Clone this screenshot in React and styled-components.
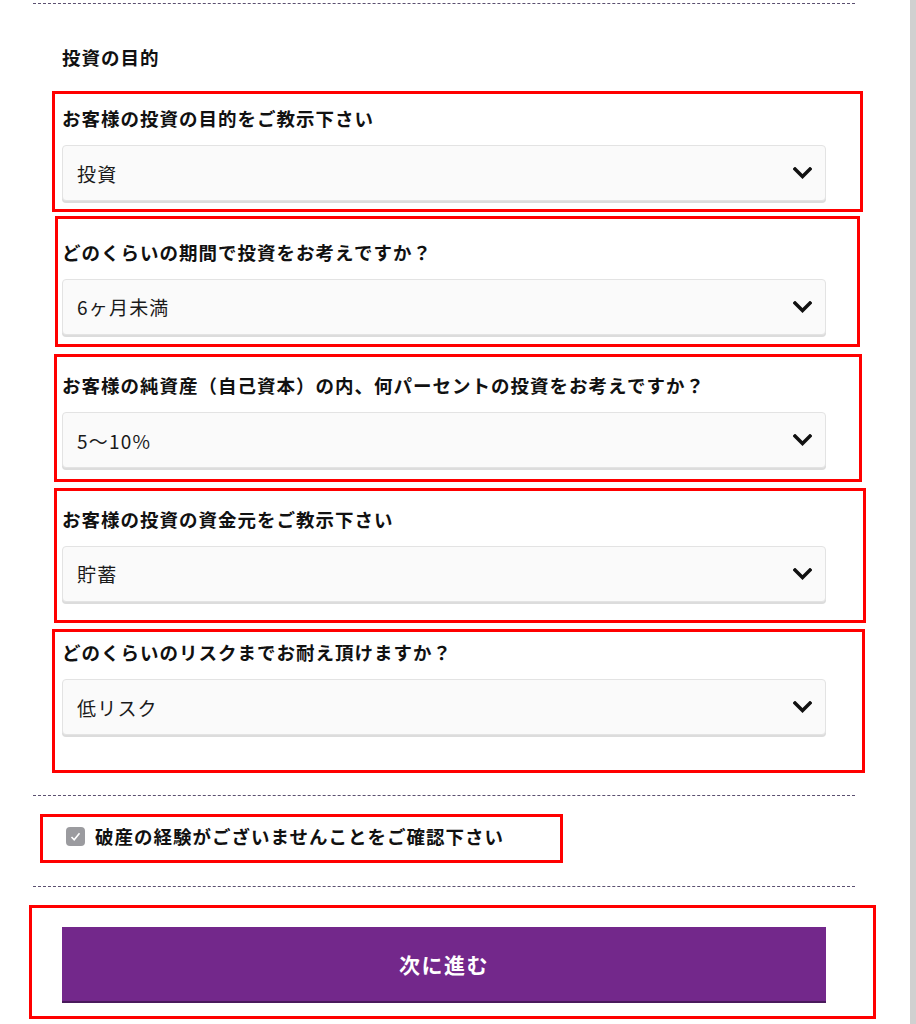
import React from 'react';
import styled, { createGlobalStyle } from 'styled-components';

const GlobalStyle = createGlobalStyle`
    html, body {
        margin: 0;
        padding: 0;
        background: #fff;
    }
    body {
        font-family: "Noto Sans CJK JP", "Noto Sans", sans-serif;
        color: #111;
    }
`;

const Page = styled.div`
    display: flex;
    min-height: 100vh;
`;

const Main = styled.main`
    width: 910px;
    padding-top: 3px;
`;

const Strip = styled.div`
    flex: 1;
    background: #d0d0d0;
`;

const Sheet = styled.div`
    margin-left: 33px;
    width: 822px;
`;

const Divider = styled.div`
    border-top: 1px dashed #5b5070;
`;

const Section = styled.section`
    display: flex;
    flex-direction: column;
    padding: ${p => p.$pad || '0 29px'};
`;

const Title = styled.h2`
    margin: 0 0 37px;
    font-size: 18.5px;
    line-height: 24px;
    font-weight: 700;
    letter-spacing: 1px;
`;

const Group = styled.div`
    position: relative;
    display: flex;
    flex-direction: column;
    gap: 15px;
    margin-bottom: ${p => p.$last ? '0' : '38.5px'};
`;

const Frame = styled.div`
    position: absolute;
    top: ${p => p.$t}px;
    left: ${p => p.$l}px;
    right: ${p => p.$r}px;
    bottom: ${p => p.$b}px;
    border: 3px solid #ff0000;
    pointer-events: none;
`;

const Label = styled.label`
    font-size: 18.5px;
    line-height: 24px;
    font-weight: 700;
    letter-spacing: 1px;
`;

const Select = styled.div`
    display: flex;
    align-items: center;
    justify-content: space-between;
    height: 56px;
    box-sizing: border-box;
    padding: 0 13px 0 14px;
    background: #fafafa;
    border: 1px solid #e3e3e3;
    border-radius: 4px;
    box-shadow: 0 2px 0 #dcdcdc;
    font-size: 19px;
    letter-spacing: 1.2px;
    color: #1a1a1a;
`;

const CheckRow = styled.div`
    position: relative;
    display: flex;
    align-items: center;
    gap: 10px;
    height: 24px;
    padding-left: 4px;
    font-size: 18.5px;
    font-weight: 700;
    letter-spacing: 1px;
`;

const Box = styled.span`
    display: flex;
    align-items: center;
    justify-content: center;
    width: 19px;
    height: 19px;
    border-radius: 4px;
    background: #9b9b9f;
`;

const ButtonWrap = styled.div`
    position: relative;
`;

const NextButton = styled.button`
    width: 100%;
    height: 76px;
    border: 0;
    border-bottom: 2px solid #4a1a5c;
    background: #73288b;
    color: #fff;
    font-family: inherit;
    font-size: 21px;
    font-weight: 700;
    letter-spacing: 1.5px;
    cursor: pointer;
`;

const Chevron = () => (
    <svg width="19" height="12" viewBox="0 0 19 12">
        <polyline points="2,2 9.5,9.5 17,2" fill="none" stroke="#111" strokeWidth="3.4" strokeLinecap="square" />
    </svg>
);

const questions = [
    { label: 'お客様の投資の目的をご教示下さい', value: '投資', frame: [-15, -10, -37, -11] },
    { label: 'どのくらいの期間で投資をお考えですか？', value: '6ヶ月未満', frame: [-23.5, -7, -34, -12.5] },
    { label: 'お客様の純資産（自己資本）の内、何パーセントの投資をお考えですか？', value: '5〜10%', frame: [-19, -8, -36, -14] },
    { label: 'お客様の投資の資金元をご教示下さい', value: '貯蓄', frame: [-18.5, -8, -40, -21.5] },
    { label: 'どのくらいのリスクまでお耐え頂けますか？', value: '低リスク', frame: [-11, -10, -39, -38] },
];

const App = () => {
    return (
        <Page>
            <GlobalStyle />
            <Main>
                <Sheet>
                    <Divider />
                    <Section $pad="41px 29px 60px">
                        <Title>投資の目的</Title>
                        {questions.map((q, i) => (
                            <Group key={i} $last={i === questions.length - 1}>
                                <Label>{q.label}</Label>
                                <Select>
                                    <span>{q.value}</span>
                                    <Chevron />
                                </Select>
                                <Frame $t={q.frame[0]} $l={q.frame[1]} $r={q.frame[2]} $b={q.frame[3]} />
                            </Group>
                        ))}
                    </Section>
                    <Divider />
                    <Section $pad="28px 29px 38px">
                        <CheckRow>
                            <Box>
                                <svg width="13" height="13" viewBox="0 0 13 13">
                                    <polyline points="2.5,7 5.2,9.8 10.5,3.2" fill="none" stroke="#fff" strokeWidth="1.6" />
                                </svg>
                            </Box>
                            破産の経験がございませんことをご確認下さい
                            <Frame $t={-10} $l={-22} $r={263} $b={-15} />
                        </CheckRow>
                    </Section>
                    <Divider />
                    <Section $pad="40px 29px 0">
                        <ButtonWrap>
                            <NextButton type="button">次に進む</NextButton>
                            <Frame $t={-22} $l={-33} $r={-50} $b={-16} />
                        </ButtonWrap>
                    </Section>
                </Sheet>
            </Main>
            <Strip />
        </Page>
    );
};

export default App;
